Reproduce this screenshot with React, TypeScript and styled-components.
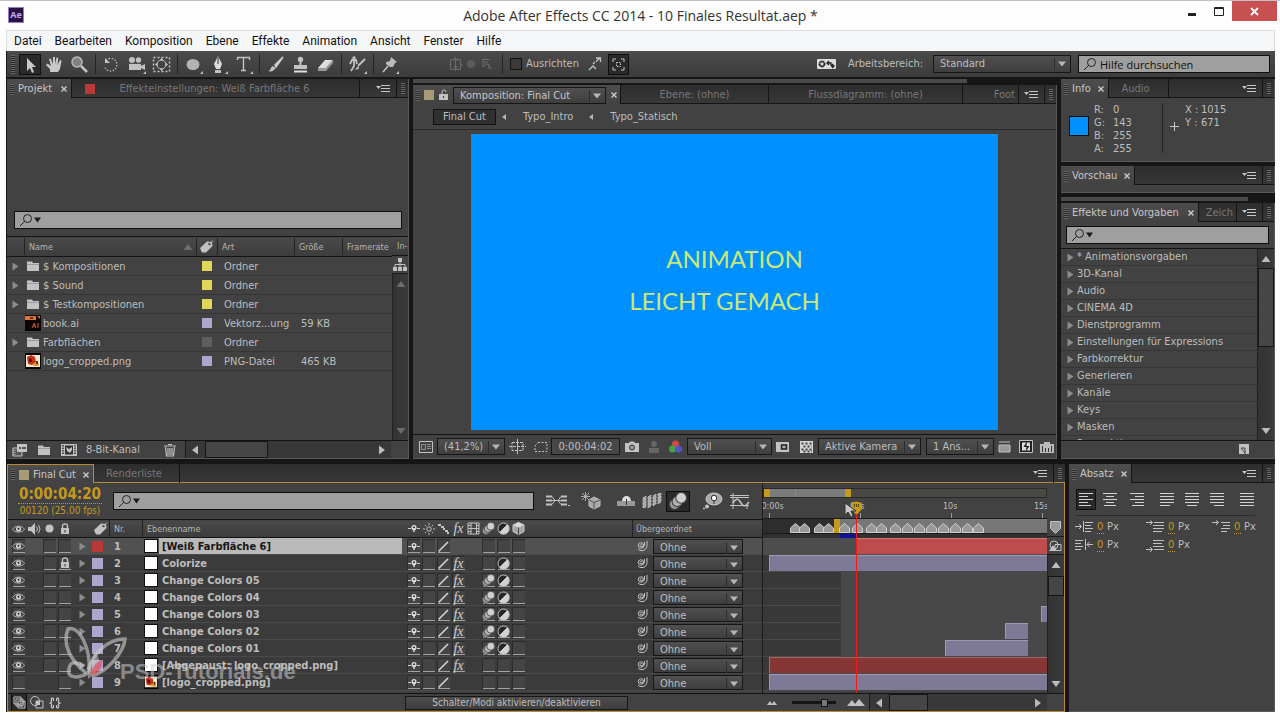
import React from "react";
import styled, { createGlobalStyle, css } from "styled-components";

const ui = `"DejaVu Sans Condensed", "DejaVu Sans", "Noto Sans", sans-serif`;
const win = `"Open Sans", "Noto Sans", sans-serif`;
const c = {
  seam: "#161616",
  panel: "#424242",
  row: "#3b3b3b",
  text: "#bdbdbd",
  dim: "#777777",
  edge: "#141414",
  light: "#5a5a5a",
  gold: "#b58a34",
  hot: "#c49a1c",
  icon: "#c2c2c2",
  field: "#9f9f9f",
  lilac: "#aaa6cc",
  yellow: "#e0d65a",
  red: "#b83a38",
};

const Global = createGlobalStyle`
  * { box-sizing: border-box; }
  body { margin: 0; background: #fdfdfd; font: 11px/16px ${ui}; color: ${c.text}; }
  button, input, select { font: inherit; color: inherit; margin: 0; padding: 0; border: 0; background: none; border-radius: 0; outline: 0; }
  svg { display: block; flex: none; }
  table { border-collapse: collapse; table-layout: fixed; }
  td, th { padding: 0; font-weight: inherit; text-align: left; white-space: nowrap; overflow: hidden; }
`;

/* ---------- window frame ---------- */
const Window = styled.div`
  min-height: 100vh;
  display: flex;
  flex-direction: column;
  border-top: 1px solid #c3bfc3;
  padding: 0 5px 8px 6px;
`;
const TitleBar = styled.header`
  height: 29px;
  display: grid;
  grid-template-columns: 136px 1fr 138px;
  margin-right: -2px;
  align-items: start;
  color: #333;
`;
const AppLogo = styled.span`
  width: 16px;
  height: 16px;
  margin: 6px 0 0 2px;
  border: 1px solid #9a7fc8;
  background: #2a1242;
  color: #c9a8f5;
  font: bold 9px/14px ${win};
  text-align: center;
`;
const Title = styled.h1`
  margin: 4px 0 0;
  font: 14px/21px ${win};
  text-align: center;
  white-space: nowrap;
`;
const WindowButtons = styled.div`
  display: flex;
  justify-content: flex-end;
`;
const WindowButton = styled.button<{ $close?: boolean }>`
  width: ${(p) => (p.$close ? 45 : 27)}px;
  height: 20px;
  display: grid;
  place-items: center;
  background: ${(p) => (p.$close ? "#c75050" : "none")};
`;
const MenuBar = styled.nav`
  height: 21px;
  display: flex;
  gap: 13px;
  padding-left: 7px;
  border: 1px solid #dcdcde;
  border-bottom: 0;
  background: #f5f6f8;
`;
const MenuItem = styled.button`
  color: #111;
  font: 12px/19px Roboto, ${win};
`;
const Shell = styled.main`
  flex: 1;
  display: flex;
  flex-direction: column;
  background: ${c.seam};
  border-left: 1px solid ${c.seam};
`;

/* ---------- toolbar ---------- */
const Toolbar = styled.div`
  height: 26px;
  display: flex;
  align-items: center;
  padding: 0 5px 0 4px;
  margin-bottom: 2px;
  background: linear-gradient(#4b4b4b, #3c3c3c);
`;
const Grip = styled.span<{ $h?: number }>`
  width: 4px;
  height: ${(p) => p.$h ?? 11}px;
  flex: none;
  background: repeating-linear-gradient(#666 0 1px, #2b2b2b 1px 2px);
`;
const Tool = styled.button<{ $on?: boolean; $w?: number }>`
  width: ${(p) => p.$w ?? 25}px;
  height: 21px;
  flex: none;
  display: grid;
  place-items: center;
  ${(p) => p.$on && css`background: #2a2a2a; border: 1px solid #0f0f0f;`}
`;
const Split = styled.span<{ $m?: number; $h?: number }>`
  width: 1px;
  height: ${(p) => p.$h ?? 20}px;
  flex: none;
  margin: 0 ${(p) => p.$m ?? 3}px;
  background: #232323;
`;
const Spacer = styled.span<{ $w?: number }>`
  flex: ${(p) => (p.$w ? `0 0 ${p.$w}px` : "1")};
`;
const Check = styled.label`
  display: flex;
  align-items: center;
  gap: 4px;
  line-height: 18px;
  input { appearance: none; width: 12px; height: 12px; background: #3a3a3a; border: 1px solid #111; }
`;

/* ---------- form parts ---------- */
const SelectBox = styled.span<{ $w?: number; $h?: number }>`
  width: ${(p) => (p.$w ? `${p.$w}px` : "100%")};
  height: ${(p) => p.$h ?? 18}px;
  flex: none;
  display: grid;
  grid-template-columns: 1fr 18px;
  align-items: center;
  border: 1px solid #161616;
  background: linear-gradient(#505050, #3e3e3e);
  select { grid-area: 1 / 1 / 2 / 3; appearance: none; width: 100%; height: 100%; padding-left: 6px; }
  svg { grid-area: 1 / 2; pointer-events: none; justify-self: center; }
`;
const Select = ({ label, value, w, h }: { label: string; value: string; w?: number; h?: number }) => (
  <SelectBox $w={w} $h={h}>
    <select aria-label={label} defaultValue={value}><option>{value}</option></select>
    <svg width="16" height="12"><path d="M1.500 0V12" stroke="#2c2c2c" /><path d="M5 3.500h8l-4 5z" fill="#b5b5b5" /></svg>
  </SelectBox>
);
const SearchBox = styled.label<{ $w?: number }>`
  ${(p) => (p.$w ? `width: ${p.$w}px; flex: none;` : "flex: 1;")}
  height: 18px;
  display: flex;
  align-items: center;
  gap: 3px;
  padding-left: 4px;
  border: 1px solid #0e0e0e;
  background: ${c.field};
  input { flex: 1; min-width: 0; height: 100%; color: #111; font: 11px/16px ${win}; }
  input::placeholder { color: #111; opacity: 1; }
`;
const Search = ({ w, placeholder, menu, label }: { w?: number; placeholder?: string; menu?: boolean; label: string }) => (
  <SearchBox $w={w}>
    <svg width={menu ? 24 : 14} height="14" fill="none" stroke="#222">
      <circle cx="8.500" cy="5.500" r="4" /><path d="M5.500 8.500 1 13" />
      {menu && <path d="M15 4.500h7l-3.500 5z" fill="#1a1a1a" stroke="none" />}
    </svg>
    <input type="text" aria-label={label} placeholder={placeholder} />
  </SearchBox>
);

/* ---------- panels ---------- */
const Panel = styled.section<{ $grow?: boolean }>`
  min-width: 0;
  min-height: 0;
  display: flex;
  flex-direction: column;
  background: ${c.panel};
  border-right: 1px solid ${c.light};
  border-bottom: 1px solid ${c.light};
  ${(p) => p.$grow && "flex: 1;"}
`;
const Tabs = styled.div<{ $hot?: boolean }>`
  height: 19px;
  flex: none;
  display: flex;
  overflow: hidden;
  background: linear-gradient(#2d2d2d, #383838);
  box-shadow: inset 0 -1px ${(p) => (p.$hot ? c.gold : c.edge)};
`;
const Tab = styled.button<{ $on?: boolean; $hot?: boolean; $w?: number; $right?: boolean }>`
  ${(p) => p.$w && `width: ${p.$w}px;`}
  flex: none;
  display: flex;
  align-items: center;
  justify-content: ${(p) => (p.$on ? "flex-start" : p.$right ? "flex-end" : "center")};
  gap: 4px;
  padding: 1px 3px 0;
  white-space: nowrap;
  overflow: hidden;
  color: ${(p) => (p.$on ? "#c6c6c6" : c.dim)};
  border-right: 1px solid ${c.edge};
  ${(p) => p.$on && css`background: linear-gradient(#4d4d4d, ${c.panel});`}
  ${(p) => p.$hot && css`border: 1px solid ${c.gold}; border-bottom: 0;`}
`;
const CloseMark = styled.svg`
  margin-left: auto;
`;
const Close = () => <CloseMark width="8" height="8" stroke="#ccc" strokeWidth="1.400"><path d="M1.500 1.500l5 5M6.500 1.500l-5 5" /></CloseMark>;
const TabEnd = () => (
  <>
    <Spacer />
    <PanelMenu aria-label="Bedienfeldmenü">
      <svg width="14" height="10" stroke="#c6c6c6"><path d="M5 1.500h9M5 4.500h9M5 7.500h9" /><path d="M0 2h5L2.500 5z" fill="#c6c6c6" stroke="none" /></svg>
    </PanelMenu>
    <TabGrip><Grip /></TabGrip>
  </>
);
const PanelMenu = styled.button`
  width: 26px;
  flex: none;
  display: grid;
  place-items: center end;
  padding-right: 6px;
  border-right: 1px solid ${c.edge};
`;
const TabGrip = styled.span`
  width: 11px;
  flex: none;
  display: grid;
  place-items: center;
`;
const Strip = styled.div<{ $end: number }>`
  height: 4px;
  flex: none;
  margin: 0 ${(p) => p.$end}px 2px 0;
  background: #4a4a4a;
`;
const Swatch = styled.span<{ $c: string; $s?: number; $b?: boolean }>`
  display: block;
  width: ${(p) => p.$s ?? 10}px;
  height: ${(p) => p.$s ?? 10}px;
  flex: none;
  background: ${(p) => p.$c};
  ${(p) => p.$b && "border: 1px solid #0e0e0e;"}
`;
const TopArea = styled.div`
  flex: 1;
  display: grid;
  grid-template-columns: 402px minmax(0, 1fr) 214px;
  gap: 4px;
  margin-bottom: 5px;
`;
const Column = styled.div`
  min-width: 0;
  min-height: 0;
  display: flex;
  flex-direction: column;
`;
const BottomArea = styled.div`
  display: grid;
  grid-template-columns: minmax(0, 1fr) 206px;
  gap: 4px;
`;
const FootBar = styled.div<{ $h?: number; $pad?: number }>`
  height: ${(p) => p.$h ?? 18}px;
  flex: none;
  display: flex;
  align-items: center;
  overflow: hidden;
  padding-left: ${(p) => p.$pad ?? 0}px;
  border-top: 1px solid ${c.edge};
`;

/* ---------- scroll bars ---------- */
const ScrollV = styled.div`
  flex: 1;
  min-height: 0;
  display: flex;
  flex-direction: column;
  align-items: center;
  padding: 5px 0 4px;
  border-left: 1px solid #222;
  background: linear-gradient(90deg, #333, #3a3a3a);
`;
const ScrollH = styled.div<{ $w?: number }>`
  ${(p) => (p.$w ? `width: ${p.$w}px; flex: none;` : "flex: 1;")}
  height: 100%;
  display: flex;
  align-items: center;
  padding: 0 4px;
  border-left: 1px solid #1a1a1a;
  background: #383838;
`;
const Thumb = styled.span<{ $w?: number; $h?: number }>`
  width: ${(p) => (p.$w ? `${p.$w}px` : "100%")};
  height: ${(p) => (p.$h ? `${p.$h}px` : "100%")};
  flex: none;
  border: 1px solid #161616;
  background: #464646;
`;
const Arrow = ({ d, off }: { d: "u" | "d" | "l" | "r"; off?: boolean }) => (
  <svg width="10" height="10" fill={off ? "#6c6c6c" : "#bbb"}>
    <path d={{ u: "M0.500 8h9L5 2z", d: "M0.500 2h9L5 8z", l: "M8 .5v9L2 5z", r: "M2 .5v9l6-4.500z" }[d]} />
  </svg>
);
const Twirl = () => <svg width="7" height="9" fill="#8c8c8c"><path d="M.5.500v8l6-4z" /></svg>;

/* ---------- icons ---------- */
const Ic = ({ w = 16, h = 16, children }: { w?: number; h?: number; children: React.ReactNode }) => (
  <svg width={w} height={h} viewBox={`0 0 ${w} ${h}`} fill="none" stroke={c.icon}>{children}</svg>
);
const F = { fill: c.icon, stroke: "none" };
const Corner = () => <path d="M20 17v3h-3z" {...F} />;
const Folder = () => <Ic w={14} h={12}><path d="M1 3V1.500h5L7 3h6v8H1z" {...F} /><path d="M1 4.500h12" stroke="#999" /></Ic>;
const Tag = () => <Ic w={15} h={13}><path d="M1 8 8 1.500l5 .5.500 4L7 12.500H3z" {...F} /><circle cx="10.500" cy="4" r="1.300" fill="#444" stroke="none" /><path d="M10.500 4 14 .5" /></Ic>;
const Eye = () => <Ic w={13} h={10}><path d="M.5 5.500C3 1 10 1 12.500 5.500 10 9 3 9 .5 5.500z" stroke="#b0b0b0" /><circle cx="6.500" cy="5" r="2.600" fill="#d0d0d0" stroke="none" /><circle cx="6.500" cy="4.800" r="1" fill="#222" stroke="none" /></Ic>;
const Speaker = () => <Ic w={13} h={12}><path d="M0 4h3l4-4v12L3 8H0z" {...F} /><path d="M8.500 3.500q2 2.500 0 5M10.500 2q3 4 0 8" /></Ic>;
const Lock = () => <Ic w={10} h={12}><rect x="1" y="5" width="8" height="6" {...F} /><path d="M2.500 5V3q0-2 2.500-2t2.500 2v2" strokeWidth="1.400" /><path d="M5 7v2.500" stroke="#333" /></Ic>;
const Shy = () => <Ic w={12} h={9}><path d="M0 4.500h3M9 4.500h3" stroke="#d0d0d0" /><path d="M6 4v4" stroke="#ddd" strokeWidth="1.500" /><circle cx="6" cy="3.500" r="1.900" stroke="#e6e6e6" strokeWidth="1.300" /></Ic>;
const Sun = () => <Ic w={12} h={12}><circle cx="6" cy="6" r="2.200" /><path d="M6 0v2M6 10v2M0 6h2M10 6h2M2 2l1.300 1.300M8.700 8.700 10 10M10 2 8.700 3.300M3.300 8.700 2 10" /></Ic>;
const Slash = () => <Ic w={13} h={13}><path d="M1.500 11.500 11 2" stroke="#d4d4d4" strokeWidth="1.600" /></Ic>;
const Dots = () => <Ic w={13} h={12}><path d="M1 1h3v2H1zM4 3h3v2H4zM6 5h2v2H6zM8 7h3v2H8zM10 9h2v2h-2z" {...F} /></Ic>;
const FilmIc = () => <Ic w={13} h={13}><path d="M1 1h11v11H1zM4 1v11M9.500 1v11M4 6.500h5M1 3.500h3M1 6.500h3M1 9.500h3M9 3.500h3M9 6.500h3M9 9.500h3" /></Ic>;
const Blur = ({ s = 13 }: { s?: number }) => (
  <svg width={s} height={s} viewBox="0 0 13 13" stroke="#444" strokeWidth=".8"><circle cx="4" cy="8.800" r="3.700" fill="#9a9a9a" /><circle cx="6" cy="6.800" r="3.700" fill="#b0b0b0" /><circle cx="8.800" cy="4.200" r="3.900" fill="#d0d0d0" /></svg>
);
const Adjust = () => <Ic w={13} h={13}><circle cx="6.500" cy="6.500" r="5.500" fill="#262626" /><path d="M10.400 2.600a5.500 5.500 0 0 1-7.800 7.800z" fill="#d2d2d2" /></Ic>;
const Cube = () => <Ic w={13} h={13}><path d="M6.500.5 12 3v6.500l-5.500 3L1 9.500V3z" fill="#a4a4a4" stroke="#ccc" /><path d="M1 3l5.500 2.500L12 3 6.500.5z" fill="#ddd" /><path d="M6.500 5.500v7" stroke="#444" /></Ic>;
const Spiral = () => <Ic w={12} h={12}><path d="M6.300 5a1.200 1.200 0 1 0-.3 1.600A1.600 1.600 0 0 0 7.600 5 2.700 2.700 0 1 0 5 8.200 3.600 3.600 0 0 0 8.500 5V2M11 1v4.500A5 5 0 0 1 6 10.600 5 5 0 0 1 2 9" /></Ic>;
const FlowIc = () => <Ic w={14} h={13}><path d="M5 0h4v4H5zM0 9h4v4H0zM5 9h4v4H5zM10 9h4v4h-4z" {...F} /><path d="M7 4v5M2 9V6.500h10V9" /></Ic>;
const Fx = styled.i`
  font: italic 14px/13px "Liberation Serif", serif;
  color: #d0d0d0;
`;

/* ---------- project ---------- */
const ProjectPreview = styled.div`
  flex: 1;
`;
const SearchRow = styled.div<{ $p: string }>`
  display: flex;
  flex: none;
  padding: ${(p) => p.$p};
`;
const HeadCell = css`
  height: 20px;
  font-size: 10px;
  color: #b5b5b5;
  background: linear-gradient(#4a4a4a, #3c3c3c);
  border-top: 1px solid ${c.edge};
  border-bottom: 1px solid ${c.edge};
`;
const ProjectBody = styled.div`
  height: 204px;
  flex: none;
  display: flex;
`;
const ProjectTable = styled.table`
  width: 385px;
  align-self: flex-start;
  th { ${HeadCell} font-size: 9px; }
  td { height: 19px; border-bottom: 1px solid #353535; }
  td > svg, td > span { margin: 0 auto; }
`;
const ThInner = styled.span<{ $p?: number; $line?: boolean }>`
  height: 17px;
  display: flex;
  align-items: center;
  justify-content: space-between;
  padding: 0 3px 0 ${(p) => p.$p ?? 5}px;
  ${(p) => p.$line && `box-shadow: inset 1px 0 #222;`}
`;
const Side = styled.div<{ $w: number }>`
  width: ${(p) => p.$w}px;
  flex: none;
  display: flex;
  flex-direction: column;
`;
const SideHead = styled.div`
  ${HeadCell}
  flex: none;
  font-size: 9px;
  line-height: 18px;
  overflow: hidden;
  padding-left: 5px;
`;
const SideButton = styled.button<{ $h: number }>`
  height: ${(p) => p.$h}px;
  flex: none;
  display: grid;
  place-items: center;
  border-bottom: 1px solid #1c1c1c;
`;
const Thumbnail = ({ ai, s = 16 }: { ai?: boolean; s?: number }) => (
  <svg width={s} height={s} viewBox="0 0 16 16">
    <rect width="16" height="16" fill="#0a0504" />
    {ai ? (
      <><path d="M0 1h11v4H0z" fill="#e0762c" /><path d="M5 2h3v2H5z" fill="#6b2a10" /><path d="M12 1h3v3z" fill="#e0762c" /><path d="M7 13l2.500-5 1 5M8 11h2M13 8v5" stroke="#d9602c" fill="none" /></>
    ) : (
      <><rect x="1" y="2" width="14" height="12" fill="#f4ead8" /><path d="M2 4l4-2 4 2 1 5-4 3-4-1z" fill="#c2341a" /><path d="M4 5l3 1v3H4z" fill="#5c1208" /><path d="M9 10l4-1 1 4H8z" fill="#e09a20" /><path d="M11 8h2v3h-2z" fill="#51320a" /></>
    )}
  </svg>
);

const assets = [
  { name: "$ Kompositionen", color: c.yellow, kind: "Ordner", size: "" },
  { name: "$ Sound", color: c.yellow, kind: "Ordner", size: "" },
  { name: "$ Testkompositionen", color: c.yellow, kind: "Ordner", size: "" },
  { name: "book.ai", color: c.lilac, kind: "Vektorz...ung", size: "59 KB" },
  { name: "Farbflächen", color: "#5e5e5e", kind: "Ordner", size: "" },
  { name: "logo_cropped.png", color: c.lilac, kind: "PNG-Datei", size: "465 KB" },
];

const Project = () => (
  <Panel>
    <Tabs>
      <Tab $on $w={65}><Grip />Projekt<Close /></Tab>
      <Tab $w={288}><Swatch $c={c.red} /><Spacer $w={16} />Effekteinstellungen: Weiß Farbfläche 6<Spacer $w={32} /></Tab>
      <TabEnd />
    </Tabs>
    <ProjectPreview />
    <SearchRow $p="0 6px 7px 7px"><Search menu label="Projekt durchsuchen" /></SearchRow>
    <ProjectBody>
      <ProjectTable>
        <colgroup><col width="17" /><col width="18" /><col width="154" /><col width="21" /><col width="77" /><col width="48" /><col width="50" /></colgroup>
        <thead>
          <tr>
            <th /><th colSpan={2}><ThInner $line>Name<Arrow d="u" off /></ThInner></th>
            <th aria-label="Etikett"><ThInner $line $p={3}><Tag /></ThInner></th>
            <th><ThInner $line>Art</ThInner></th><th><ThInner $line>Größe</ThInner></th><th><ThInner $line>Framerate</ThInner></th>
          </tr>
        </thead>
        <tbody>
          {assets.map((a) => (
            <tr key={a.name}>
              <td>{a.kind === "Ordner" && <Twirl />}</td>
              <td>{a.kind === "Ordner" ? <Folder /> : <Thumbnail ai={a.name === "book.ai"} />}</td>
              <td><Name $p={1}>{a.name}</Name></td>
              <td><Swatch $c={a.color} /></td>
              <td><Name $p={7}>{a.kind}</Name></td>
              <td colSpan={2}><Name $p={7}>{a.size}</Name></td>
            </tr>
          ))}
        </tbody>
      </ProjectTable>
      <Side $w={16}>
        <SideHead>In-</SideHead>
        <SideButton $h={18} aria-label="Flussdiagramm"><FlowIc /></SideButton>
        <ScrollV><Arrow d="u" off /><Spacer /><Arrow d="d" off /></ScrollV>
      </Side>
    </ProjectBody>
    <FootBar $pad={4}>
      <Tool aria-label="Footage interpretieren" $w={18}><Ic><path d="M1 6h9v8H1z" fill="#555" /><path d="M1 8v5M3 8v5" strokeDasharray="1 1" /><path d="M5 2h10v8H5z" {...F} /><path d="M7 6h2M10 6h4" stroke="#333" strokeWidth="1.500" /></Ic></Tool>
      <Tool aria-label="Neuer Ordner" $w={30}><Folder /></Tool>
      <Tool aria-label="Neue Komposition" $w={20}><Ic><path d="M0 2h16v12H0z" {...F} /><path d="M4 3.500h8v9H4z" fill="#333" stroke="none" /><path d="M2 3v10M14 3v10" strokeDasharray="1.500 1" strokeWidth="1.500" stroke="#333" /><path d="M5 5l3 2 3-2v3l-2 3-3-2z" {...F} /></Ic></Tool>
      <Spacer $w={7} />
      <button>8-Bit-Kanal</button>
      <Spacer />
      <Tool aria-label="Löschen" $w={22}><Ic w={12} h={14}><path d="M0 3h12M4 1.500h4M1.500 4l1 9h7l1-9M4 5v7M6 5v7M8 5v7" strokeWidth="1.200" /></Ic></Tool>
      <Spacer $w={4} />
      <ScrollH $w={206}><Arrow d="l" /><Spacer $w={5} /><Thumb $w={63} /><Spacer /><Arrow d="r" /></ScrollH>
      <Spacer $w={17} />
    </FootBar>
  </Panel>
);
const Name = styled.span<{ $p?: number }>`
  display: block;
  height: 18px;
  line-height: 19px;
  padding-left: ${(p) => p.$p ?? 0}px;
`;

/* ---------- composition ---------- */
const Crumbs = styled.nav`
  height: 26px;
  flex: none;
  display: flex;
  align-items: center;
  padding-left: 20px;
  border-bottom: 1px solid #2b2b2b;
`;
const Crumb = styled.button<{ $on?: boolean }>`
  height: 16px;
  line-height: 14px;
  padding: 0 9px;
  border: 1px solid ${(p) => (p.$on ? "#111" : "transparent")};
  background: ${(p) => (p.$on ? "#303030" : "none")};
`;
const Viewer = styled.div`
  flex: 1;
  display: flex;
  justify-content: center;
  align-items: center;
`;
const Stage = styled.div`
  height: 296px;
  aspect-ratio: 527 / 296;
  padding-bottom: 4px;
  background: #0090ff;
  color: #cbe874;
  display: flex;
  flex-direction: column;
  justify-content: center;
  align-items: center;
  font: 24px/42px Lato, "Open Sans", sans-serif;
`;
const StageLine = styled.span`
  white-space: nowrap;
  &:last-child { margin-right: 20px; }
`;
const TimeField = styled.button`
  width: 69px;
  height: 17px;
  flex: none;
  border: 1px solid #161616;
  background: #484848;
`;
const Back = () => <svg width="17" height="8" fill="#b5b5b5"><path d="M10 1v6L6 4z" /></svg>;

const Composition = () => (
  <Column>
    <Strip $end={90} />
    <Panel $grow>
      <Tabs>
        <Tab $on $w={208} as="div"><Grip /><Swatch $c="#a89a76" /><Ic w={11} h={12}><rect x="1" y="5" width="9" height="6" {...F} /><path d="M4 5V3q0-2 2-2t2 2" /><path d="M5.500 7v2" stroke="#333" /></Ic><Select label="Komposition" value="Komposition: Final Cut" w={153} h={17} /><Close /></Tab>
        <Tab $w={148}>Ebene: (ohne)</Tab>
        <Tab $w={194}>Flussdiagramm: (ohne)</Tab>
        <Tab $w={56} $right>Foot</Tab>
        <TabEnd />
      </Tabs>
      <Crumbs><Crumb $on>Final Cut</Crumb><Back /><Crumb>Typo_Intro</Crumb><Back /><Crumb>Typo_Statisch</Crumb></Crumbs>
      <Viewer><Stage><StageLine>ANIMATION</StageLine><StageLine>LEICHT GEMACH</StageLine></Stage></Viewer>
      <FootBar $h={24} $pad={2}>
        <Tool aria-label="Immer Vorschau" $w={22}><Ic w={14} h={12}><path d="M.5.500h13v11H.5z" /><path d="M2.500 3.500h4v5h-4zM8 3.500h4M8 5.500h4M8 7.500h4" stroke="#909090" /></Ic></Tool>
        <Select label="Zoom" value="(41,2%)" w={68} h={17} />
        <Tool aria-label="Raster"><Ic w={18} h={16}><path d="M3 3.500h11v8H3zM8.500 0v15M0 7.500h17" strokeDasharray="3 1" /></Ic></Tool>
        <Tool aria-label="Maske" $w={21}><Ic w={14} h={12}><path d="M4 1.500h9v9H1V5z" strokeDasharray="2 1.500" /></Ic></Tool>
        <TimeField>0:00:04:02</TimeField>
        <Tool aria-label="Schnappschuss" $w={23}><Ic w={14} h={12}><path d="M0 2h4l1-1.500h4L10 2h4v9H0z" {...F} /><circle cx="7" cy="6.500" r="2.500" stroke="#333" fill="#999" /></Ic></Tool>
        <Tool aria-label="Schnappschuss anzeigen" $w={22}><Ic w={12} h={14}><circle cx="6" cy="4" r="3" fill="#666" stroke="none" /><path d="M1 13V8h10v5z" fill="#666" stroke="none" /></Ic></Tool>
        <Tool aria-label="Kanäle" $w={22}><svg width="16" height="14"><circle cx="7.500" cy="4" r="3.500" fill="#cf4a43" /><circle cx="4.500" cy="9" r="3.500" fill="#4aa046" /><circle cx="10.500" cy="9" r="3.500" fill="#5656c8" /></svg></Tool>
        <Select label="Auflösung" value="Voll" w={85} h={17} />
        <Tool aria-label="Bereich" $w={22}><Ic w={14} h={12}><path d="M0 1h13v10H0z" {...F} /><path d="M5.500 4h5v4h-5z" stroke="#222" fill="#aaa" strokeWidth="1.500" /></Ic></Tool>
        <Tool aria-label="Transparenz" $w={24}><svg width="13" height="12" fill="#d5d5d5"><path d="M0 0h13v12H0z" /><path d="M1.500 2.500H12M3.500 5.500H12M1.500 8.500H12M3.500 10.500H12" stroke="#444" strokeWidth="2" strokeDasharray="2 2" /></svg></Tool>
        <Select label="Ansicht" value="Aktive Kamera" w={103} h={17} />
        <Spacer $w={5} />
        <Select label="Ansichten" value="1 Ans..." w={68} h={17} />
        <Tool aria-label="Seitenverhältnis" $w={22}><Ic w={14} h={12}><path d="M1 1h11M1 4h11v7H1z" fill="#999" /></Ic></Tool>
        <Tool aria-label="Schnelle Vorschau" $w={21}><Ic w={15} h={15}><path d="M.5 1.500h13v12H.5z" fill="#222" /><path d="M3 3.500h8v8H3z" stroke="none" fill="#ddd" /><path d="M8 2 4.500 8h3l-1 5 4-6h-3z" fill="#222" stroke="none" /></Ic></Tool>
        <Tool aria-label="Zeitleiste" $w={19}><Ic w={14} h={12}><path d="M0 3h4V1h6v2h4v9H0z" fill="#bbb" stroke="none" /><path d="M2.500 5v6M5.500 7v4M8.500 7v4M11.500 5v6" stroke="#333" /></Ic></Tool>
      </FootBar>
    </Panel>
  </Column>
);

/* ---------- right column ---------- */
const InfoBody = styled.div`
  height: 63px;
  display: flex;
  padding: 5px 8px;
`;
const InfoList = styled.dl<{ $k: number }>`
  margin: 0;
  display: grid;
  grid-template-columns: ${(p) => p.$k}px 42px;
  grid-auto-rows: 13px;
  line-height: 14px;
  align-content: start;
  dd { margin: 0; }
`;
const SwatchWrap = styled.span`
  width: 25px;
  padding-top: 13px;
`;
const ListArea = styled.div`
  flex: 1 1 0;
  min-height: 0;
  display: flex;
  border-top: 1px solid ${c.edge};
`;
const EffectList = styled.ul`
  flex: 1;
  margin: 0;
  padding: 0;
  overflow: hidden;
  list-style: none;
`;
const EffectItem = styled.li`
  height: 17px;
  display: flex;
  align-items: center;
  gap: 3px;
  padding-left: 6px;
  border-bottom: 1px solid #363636;
`;
const effects = ["* Animationsvorgaben", "3D-Kanal", "Audio", "CINEMA 4D", "Dienstprogramm", "Einstellungen für Expressions", "Farbkorrektur", "Generieren", "Kanäle", "Keys", "Masken", "Perspektive"];

const Sidebar = () => (
  <Column>
    <Panel>
      <Tabs><Tab $on $w={48}><Grip />Info<Close /></Tab><Tab $w={60}>Audio<Spacer $w={2} /></Tab><TabEnd /></Tabs>
      <InfoBody>
        <SwatchWrap><Swatch $c="#0090ff" $s={20} $b /></SwatchWrap>
        <InfoList $k={19}><dt>R:</dt><dd>0</dd><dt>G:</dt><dd>143</dd><dt>B:</dt><dd>255</dd><dt>A:</dt><dd>255</dd></InfoList>
        <Split $m={7} $h={50} />
        <svg width="15" height="46" stroke="#c6c6c6"><path d="M4.500 19v9M0 23.500h9" /></svg>
        <InfoList $k={16}><dt>X :</dt><dd>1015</dd><dt>Y :</dt><dd>671</dd></InfoList>
      </InfoBody>
    </Panel>
    <Spacer $w={4} />
    <Panel>
      <Tabs><Tab $on $w={74}><Grip />Vorschau<Close /></Tab><TabEnd /></Tabs>
      <Spacer $w={7} />
    </Panel>
    <Spacer $w={4} />
    <Strip $end={27} />
    <Panel $grow>
      <Tabs>
        <Tab $on $w={138}><Grip />Effekte und Vorgaben<Close /></Tab>
        <Tab $w={38} $right>Zeich</Tab>
        <TabEnd />
      </Tabs>
      <SearchRow $p="4px 5px"><Search menu label="Effekte durchsuchen" /></SearchRow>
      <ListArea>
        <EffectList>{effects.map((e) => <EffectItem key={e}><Twirl />{e}</EffectItem>)}</EffectList>
        <Side $w={17}><ScrollV><Arrow d="u" /><Spacer $w={4} /><Thumb $h={79} /><Spacer /><Arrow d="d" /></ScrollV></Side>
      </ListArea>
      <FootBar><Spacer /><Tool aria-label="Neuer Binärordner" $w={20}><Ic w={11} h={11}><path d="M0 0h10v10H0z" {...F} /><path d="M2 4h4v6M2 4l4 5" stroke="#444" /></Ic></Tool><Spacer $w={20} /></FootBar>
    </Panel>
  </Column>
);

/* ---------- timeline ---------- */
const TimelinePanel = styled.section`
  position: relative;
  min-width: 0;
  display: flex;
  flex-direction: column;
  background: ${c.panel};
`;
const TimelineFrame = styled.div`
  border: 1px solid ${c.gold};
  border-top: 0;
`;
const TimelineBody = styled.div`
  display: flex;
  height: 210px;
`;
const Layers = styled.div`
  width: 755px;
  flex: none;
  border-right: 1px solid #1a1a1a;
`;
const LayerTop = styled.div`
  height: 36px;
  display: flex;
  align-items: center;
`;
const TimeReadout = styled.button`
  width: 104px;
  color: ${c.hot};
  line-height: 13px;
  strong { display: block; width: 84px; margin: 0 auto; font-size: 15px; line-height: 17px; border-bottom: 1px dotted ${c.hot}; }
  small { font-size: 10px; }
`;
const LayerTable = styled.table`
  width: 754px;
  th { ${HeadCell} height: 18px; font-size: 9px; }
  th svg, td svg { margin: 0 auto; }
`;
const LayerRow = styled.tr<{ $on?: boolean }>`
  background: ${(p) => (p.$on ? "#515151" : c.row)};
  td { height: 17px; border-bottom: 1px solid #4a4a4a; }
`;
const Switch = styled.button<{ $left?: boolean }>`
  width: 13px;
  height: 14px;
  display: grid;
  place-items: center;
  margin: ${(p) => (p.$left ? "0 0 0 4px" : "0 auto")};
  background: #444;
  box-shadow: inset 1px 1px #2c2c2c, inset 0 -1px #a2a2a2;
`;
const HeadIcon = styled.span<{ $left?: boolean }>`
  height: 16px;
  display: grid;
  place-items: center;
  ${(p) => p.$left && "padding-left: 2px;"}
`;
const Num = styled.b`
  display: block;
  height: 16px;
  padding-left: 5px;
  line-height: 17px;
`;
const LayerIcon = styled.span`
  display: block;
  width: 14px;
  height: 14px;
  margin: 0 auto;
  background: #fff;
  border: 1px solid #0e0e0e;
`;
const LayerName = styled.b<{ $on?: boolean }>`
  display: block;
  height: 16px;
  margin-right: 4px;
  padding-left: 3px;
  line-height: 18px;
  ${(p) => p.$on && "background: #b9b9b9; color: #161616;"}
`;
type Layer = { name: string; color?: string; fx?: boolean; blur?: boolean; adj?: boolean; lock?: boolean; on?: boolean; image?: boolean; bar?: [number, number]; barColor?: string };
const bar = { lilac: "#7d7996", red: "#863634", hot: "#bf4c4c" };
const layers: Layer[] = [
  { name: "[Weiß Farbfläche 6]", color: c.red, on: true, bar: [4.8, 15.27], barColor: bar.hot },
  { name: "Colorize", fx: true, adj: true, lock: true, bar: [0, 15.27] },
  { name: "Change Colors 05", fx: true, blur: true, adj: true },
  { name: "Change Colors 04", fx: true, blur: true, adj: true },
  { name: "Change Colors 03", fx: true, blur: true, adj: true, bar: [14.92, 15.27] },
  { name: "Change Colors 02", fx: true, blur: true, adj: true, bar: [12.94, 14.25] },
  { name: "Change Colors 01", fx: true, blur: true, adj: true, bar: [9.64, 14.25] },
  { name: "[Abgepaust: logo_cropped.png]", fx: true, bar: [0, 15.27], barColor: bar.red },
  { name: "[logo_cropped.png]", image: true, bar: [0, 15.27] },
];
const at = (s: number) => `${((s + 0.33) / 15.6) * 100}%`;
const span = (a: number, b: number) => ({ left: at(a), width: `${((b - a) / 15.6) * 100}%` });

const Time = styled.div`
  position: relative;
  flex: 1;
  min-width: 0;
  overflow: hidden;
`;
const NavBar = styled.div`
  position: relative;
  height: 10px;
  margin-top: 5px;
  background: #4b4944;
  border: 1px solid #292929;
`;
const NavRange = styled.div`
  width: 31%;
  height: 8px;
  background: #7b7b7b;
  border: solid ${c.hot};
  border-width: 0 6px;
`;
const NavMark = styled.span`
  position: absolute;
  left: 11%;
  top: 0;
  width: 1px;
  height: 8px;
  background: #f06060;
`;
const Ruler = styled.div`
  position: relative;
  height: 20px;
`;
const RulerLabel = styled.span`
  position: absolute;
  top: 0;
  font-size: 9px;
  transform: translateX(-50%);
`;
const RulerTick = styled.span`
  position: absolute;
  bottom: 0;
  width: 1px;
  height: 5px;
  background: #999;
`;
const Markers = styled.div`
  position: relative;
  height: 16px;
  border-top: 1px solid #1b1b1b;
  border-bottom: 1px solid #1b1b1b;
  background: #2d2d2d;
`;
const WorkArea = styled.span`
  position: absolute;
  top: 0;
  right: 0;
  height: 14px;
  background: #777;
  border-left: 6px solid ${c.hot};
`;
const Marker = styled.svg`
  position: absolute;
  top: 4px;
  margin-left: -6px;
`;
const Cache = styled.div`
  position: relative;
  height: 4px;
  background: #303030;
  span { position: absolute; top: 0; height: 4px; background: #12129c; }
`;
const Track = styled.div<{ $on?: boolean; $free?: boolean }>`
  position: relative;
  height: 17px;
  background: ${(p) => (p.$on ? "#4d4d4d" : "#393939")};
  border-bottom: 1px solid ${(p) => (p.$on ? "#4d4d4d" : "#4a4a4a")};
`;
const WorkShade = styled.span`
  position: absolute;
  top: 0;
  bottom: -1px;
  right: 0;
  background: #484848;
`;
const Bar = styled.span<{ $c: string }>`
  position: absolute;
  top: 0;
  height: 16px;
  background: ${(p) => p.$c};
  box-shadow: inset 1px 1px rgba(255, 255, 255, 0.25);
`;
const Playhead = styled.span`
  position: absolute;
  z-index: 1;
  top: 31px;
  bottom: 0;
  margin-left: -1px;
  border-left: 1px solid #ee1c18;
`;
const PlayheadGrip = styled.svg`
  position: absolute;
  top: 18px;
  margin-left: -6px;
`;
const Pointer = styled.svg`
  position: absolute;
  top: 19px;
  margin-left: -13px;
`;
const LayerFoot = styled(FootBar)`
  button { flex: none; }
`;
const ModeButton = styled.button`
  width: 223px;
  height: 14px;
  line-height: 12px;
  font-size: 10px;
  border: 1px solid #161616;
  background: linear-gradient(#4d4d4d, #3e3e3e);
`;
const ZoomRange = styled.input`
  appearance: none;
  width: 44px;
  height: 10px;
  background: linear-gradient(#151515, #151515) center / 100% 3px no-repeat;
  &::-webkit-slider-thumb { appearance: none; width: 7px; height: 8px; background: #777; border: 1px solid #151515; }
`;
const Watermark = styled.div`
  position: absolute;
  z-index: 2;
  left: 50px;
  top: 160px;
  display: flex;
  align-items: flex-end;
  color: rgba(205, 205, 205, 0.55);
  font: bold 22px/20px "Liberation Sans", sans-serif;
  pointer-events: none;
  span { margin-left: -9px; }
`;
const markers = [1.5, 2, 2.8, 3.3, 4.18, 4.9, 5.65, 6.2, 6.98, 7.63, 8.3, 8.96, 9.62, 10.28, 10.94, 11.55];
const LayerHead = ["Video", "Audio", "Solo", "Schützen"];
const headIcons = [<Eye />, <Speaker />, <Ic w={9} h={9}><circle cx="4.500" cy="4.500" r="4" {...F} /></Ic>, <Lock />];
const switchHeads: [string, React.ReactNode][] = [["Scheu", <Shy />], ["Falten", <Sun />], ["Qualität", <Dots />], ["Effekt", <Fx>fx</Fx>], ["Frame", <FilmIc />], ["Bewegungsunschärfe", <Blur />], ["Einstellung", <Adjust />], ["3D", <Cube />]];

const Timeline = () => (
  <TimelinePanel>
    <Tabs $hot>
      <Tab $on $hot $w={87}><Grip /><Swatch $c="#a89a76" />Final Cut<Close /></Tab>
      <Tab $w={86}>Renderliste<Spacer $w={1} /></Tab>
      <TabEnd />
    </Tabs>
    <TimelineFrame>
      <TimelineBody>
        <Layers>
          <LayerTop>
            <TimeReadout><strong>0:00:04:20</strong><small>00120 (25.00 fps)</small></TimeReadout>
            <Spacer $w={1} />
            <Search menu w={421} label="Ebenen durchsuchen" />
            <Spacer $w={11} />
            <Tool aria-label="Mini-Flussdiagramm" $w={26}><Ic w={24} h={14}><path d="M0 2.500h6M0 6.500h6M0 10.500h6M15 2.500h6M15 6.500h6M15 10.500h6" strokeWidth="2" /><path d="M6 2.500l3 4-3 4M15 2.500l-3 4 3 4M6 6.500h9" /><path d="M22 11.500h2" /></Ic></Tool>
            <Spacer $w={9} />
            <Tool aria-label="3D-Entwurf" $w={22}><Ic w={20} h={18}><path d="M4.500 0v9M0 4.500h9M1 1l7 7M8 1 1 8" strokeWidth=".8" /><path d="M13 5l6 3v6l-6 3-5-3V8z" fill="#a8a8a8" /><path d="M8 8l5 2.500L19 8M13 10.500V17" stroke="#555" /></Ic></Tool>
            <Spacer $w={13} />
            <Tool aria-label="Scheue Ebenen" $w={22}><Ic w={18} h={16}><path d="M0 8h18v5H0z" fill="#999" stroke="none" /><path d="M5 8a4.500 5 0 0 1 9 0z" fill="#ddd" stroke="none" /><path d="M9.500 6v6" stroke="#333" /></Ic></Tool>
            <Spacer $w={4} />
            <Tool aria-label="Frame-Überblendung" $w={22}><Ic w={20} h={18}><path d="M1 6l3-2v11l-3 1zM6 5l3-2v11l-3 2zM11 4l3-2v10l-3 2zM16 2l3-1v9l-3 2z" fill="#a8a8a8" strokeDasharray="2 1" /></Ic></Tool>
            <Spacer $w={3} />
            <Tool $on aria-label="Bewegungsunschärfe" $w={24}><Blur s={18} /></Tool>
            <Spacer $w={11} />
            <Tool aria-label="Brainstorm" $w={24}><Ic w={20} h={18}><ellipse cx="11" cy="7" rx="8" ry="6" fill="#aaa" stroke="#ccc" /><circle cx="11" cy="6" r="2.700" fill="#fff" stroke="#333" /><path d="M11 9v3" stroke="#333" /><circle cx="4" cy="14.500" r="2" {...F} /><circle cx="1" cy="16.500" r="1" {...F} /></Ic></Tool>
            <Spacer $w={3} />
            <Tool aria-label="Diagrammeditor" $w={24}><Ic w={20} h={17}><path d="M0 2.500h19M0 4.500h19M0 12.500h19M3 0v16M17 12v4" /><path d="M3 10c3-5 5-5 8 0s5 3 8-1" strokeWidth="1.500" /></Ic></Tool>
          </LayerTop>
          <LayerTable>
            <colgroup>
              {[19, 15, 15, 15, 20, 17, 33, 17, 247, 15, 15, 15, 15, 15, 15, 15, 15, 106, 19, 111].map((w, i) => <col key={i} width={w} />)}
            </colgroup>
            <thead>
              <tr>
                {LayerHead.map((l, i) => <th key={l} aria-label={l}><HeadIcon $left={i === 0}>{headIcons[i]}</HeadIcon></th>)}
                <th><ThInner $p={0} /></th><th aria-label="Etikett"><Tag /></th>
                <th><ThInner $line>Nr.</ThInner></th>
                <th colSpan={2}><ThInner $line>Ebenenname</ThInner></th>
                {switchHeads.map(([l, i]) => <th key={l} aria-label={l}><HeadIcon>{i}</HeadIcon></th>)}
                <th /><th colSpan={2}><ThInner $line $p={4}>Übergeordnet</ThInner></th>
              </tr>
            </thead>
            <tbody>
              {layers.map((l, i) => (
                <LayerRow key={l.name} $on={l.on}>
                  <td><Switch $left aria-label="Video">{!l.image && <Eye />}</Switch></td>
                  <td />
                  <td>{!l.image && <Switch aria-label="Solo" />}</td>
                  <td><Switch aria-label="Schützen">{l.lock && <Lock />}</Switch></td>
                  <td><Twirl /></td>
                  <td><Swatch $c={l.color ?? c.lilac} $s={11} /></td>
                  <td><Num>{i + 1}</Num></td>
                  <td>{l.image ? <Thumbnail s={14} /> : <LayerIcon />}</td>
                  <td><LayerName $on={l.on}>{l.name}</LayerName></td>
                  <td><Switch aria-label="Scheu"><Shy /></Switch></td>
                  <td><Switch aria-label="Falten" /></td>
                  <td><Switch aria-label="Qualität"><Slash /></Switch></td>
                  <td>{l.fx && <Switch aria-label="Effekte"><Fx>fx</Fx></Switch>}</td>
                  <td />
                  <td><Switch aria-label="Bewegungsunschärfe">{l.blur && <Blur />}</Switch></td>
                  <td><Switch aria-label="Einstellung">{l.adj && <Adjust />}</Switch></td>
                  <td><Switch aria-label="3D" /></td>
                  <td />
                  <td><Spiral /></td>
                  <td><ParentCell><Select label={`Übergeordnet ${i + 1}`} value="Ohne" w={90} h={15} /></ParentCell></td>
                </LayerRow>
              ))}
            </tbody>
          </LayerTable>
        </Layers>
        <Time>
          <NavBar><NavRange /><NavMark /></NavBar>
          <Ruler>
            <RulerLabel style={{ left: at(0.2) }}>0:00s</RulerLabel>
            <RulerLabel style={{ left: at(4.85) }}>05s</RulerLabel>
            <RulerLabel style={{ left: at(9.95) }}>10s</RulerLabel>
            <RulerLabel style={{ left: at(14.95) }}>15s</RulerLabel>
            {[0, 5, 10, 15].map((s) => <RulerTick key={s} style={{ left: at(s) }} />)}
          </Ruler>
          <Markers>
            <WorkArea style={{ left: at(3.55) }} />
            {markers.map((m) => (
              <Marker key={m} width="11" height="10" style={{ left: at(m) }}><path d="M.5 9.500V5l5-4.500 5 4.500v4.500z" fill="#999" stroke="#d0d0d0" /></Marker>
            ))}
          </Markers>
          <Cache><span style={span(3.9, 4.8)} /></Cache>
          {layers.map((l) => (
            <Track key={l.name} $on={l.on}>
              {!l.on && <WorkShade style={{ left: at(3.93) }} />}
              {l.bar && <Bar $c={l.barColor ?? bar.lilac} style={span(l.bar[0], l.bar[1])} />}
            </Track>
          ))}
          <Playhead style={{ left: at(4.82) }} />
          <PlayheadGrip width="11" height="15" style={{ left: at(4.82) }}><path d="M0 2q5-3 11 0v6l-5.500 6L0 8z" fill={c.hot} /><path d="M3.500 3v3M5.500 3v3M7.500 3v3" stroke="#5b4300" /></PlayheadGrip>
          <Pointer width="13" height="17" style={{ left: at(4.82) }}><path d="M1 1v12l3-3 3 5 2-1-2-5h5z" fill="#c9c9c9" stroke="#333" /></Pointer>
        </Time>
        <Side $w={17}>
          <Spacer $w={35} />
          <SideButton $h={19} aria-label="Marke"><Ic w={11} h={13}><path d="M.5.500h10v7l-5 5-5-5z" fill="#999" /></Ic></SideButton>
          <SideButton $h={18} aria-label="Komposition"><Ic w={13} h={12}><circle cx="5" cy="5" r="4" /><path d="M6 4.500h6v6H6z" /><path d="M0 11l4-6 4 6z" {...F} /></Ic></SideButton>
          <ScrollV><Arrow d="u" /><Spacer $w={6} /><Thumb $h={20} /><Spacer /><Arrow d="d" /></ScrollV>
        </Side>
      </TimelineBody>
      <LayerFoot $pad={3}>
        <Tool $on aria-label="Ebenenschalter" $w={16}><Ic w={13} h={13}><path d="M1 1h7v7H1zM3 3h7v7H3zM5 5h7v7H5z" fill="#333" /><path d="M6 8l2 2 3-4" /></Ic></Tool>
        <Tool aria-label="Übertragungssteuerung" $w={20}><Ic w={14} h={13}><circle cx="5" cy="5" r="4.500" /><path d="M6 5h7v7H6z" /><path d="M6 5h4v4H6z" {...F} /></Ic></Tool>
        <Tool aria-label="In/Out" $w={16}><Ic w={12} h={12}><path d="M4 1Q2 1 2.500 3.500T.500 6Q3 6 2.500 8.500T4 11M8 1q2 0 1.500 2.500t2 2.500Q9 6 9.500 8.500T8 11" strokeWidth="1.400" /><path d="M4.500 1v3M7.500 1v3M4.500 8v3M7.500 8v3" /></Ic></Tool>
        <Spacer $w={342} />
        <ModeButton>Schalter/Modi aktivieren/deaktivieren</ModeButton>
        <Spacer />
        <Ic w={10} h={7}><path d="M0 6l3-4 2 3 2-3 3 4z" {...F} /></Ic>
        <Spacer $w={15} />
        <ZoomRange type="range" defaultValue={78} aria-label="Zeitzoom" />
        <Spacer $w={11} />
        <Ic w={18} h={9}><path d="M0 8l5-6 3 4 4-5 6 7z" {...F} /></Ic>
        <Spacer $w={4} />
        <ScrollH $w={178}><Arrow d="l" /><Spacer $w={5} /><Thumb $w={39} /><Spacer /><Arrow d="r" /></ScrollH>
        <Spacer $w={17} />
      </LayerFoot>
    </TimelineFrame>
    <Watermark>
      <svg width="72" height="58" fill="none" stroke="rgba(205,205,205,.6)" strokeWidth="3.500">
        <path d="M29 49C13 36 5 20 11 5 22 1 34 24 32 48" /><path d="M31 46C36 30 50 15 68 15 67 28 50 48 35 52" /><path d="M27 42C16 36 11 38 12 50c4 5 14 3 20-2" />
        <path d="M38 28c-4 8-8 15-7 27 6-3 11-12 11-20z" fill="rgba(205,205,205,.5)" stroke="none" /><path d="M33 50c4-10 8-13 12-14q1 8-7 15z" fill="rgba(225,90,105,.8)" stroke="none" />
      </svg>
      <span>PSD-Tutorials.de</span>
    </Watermark>
  </TimelinePanel>
);
const ParentCell = styled.div`
  padding-left: 2px;
`;

/* ---------- paragraph ---------- */
const AlignRow = styled.div`
  display: flex;
  margin: 6px 19px 3px 7px;
  padding-bottom: 5px;
  border-bottom: 1px solid #2a2a2a;
`;
const Indents = styled.div`
  display: grid;
  grid-template-columns: 71px 66px 55px;
  padding-left: 6px;
  row-gap: 2px;
`;
const Indent = styled.label`
  height: 16px;
  display: flex;
  align-items: center;
  gap: 3px;
  input { width: 7px; height: 13px; color: ${c.hot}; border-bottom: 1px dotted ${c.hot}; }
`;
const aligns: [string, string][] = [
  ["Linksbündig", "M1 1.500h14M1 4.500h9M1 7.500h14M1 10.500h9M1 13.500h12"],
  ["Zentriert", "M1 1.500h14M4 4.500h8M1 7.500h14M4 10.500h8M2 13.500h12"],
  ["Rechtsbündig", "M1 1.500h14M6 4.500h9M1 7.500h14M6 10.500h9M3 13.500h12"],
  ["Blocksatz links", "M1 1.500h14M1 4.500h14M1 7.500h14M1 10.500h14M1 13.500h10"],
  ["Blocksatz Mitte", "M1 1.500h14M1 4.500h14M1 7.500h14M1 10.500h14M3 13.500h10"],
  ["Blocksatz rechts", "M1 1.500h14M1 4.500h14M1 7.500h14M1 10.500h14M5 13.500h10"],
  ["Blocksatz", "M1 1.500h14M1 4.500h14M1 7.500h14M1 10.500h14M1 13.500h14"],
];
const indents = [
  "M0 6.500h6M4 4l2.500 2.500L4 9M8.500 1v11M10 2.500h8M10 5.500h6M10 8.500h8M10 11.500h6",
  "M0 2.500h6M4 .5l2.500 2L4 5M8 2.500h10M7 5.500h11M7 8.500h11M7 11.500h9",
  "M0 2.500h6M4 .5l2.500 2L4 5M9 2.500h9M11 5.500h7M9 8.500h9M9 11.500h6",
  "M0 2.500h8M0 5.500h6M0 8.500h8M0 11.500h6M10.500 1v11M18 6.500h-6M14.500 4 12 6.500 14.500 9",
  "M0 11.500h6M4 9l2.500 2.500L4 14M7 2.500h11M7 5.500h9M7 8.500h11M8 11.500h10",
];
const Paragraph = () => (
  <Panel>
    <Tabs><Tab $on $w={63}><Grip />Absatz<Close /></Tab><TabEnd /></Tabs>
    <AlignRow>
      {aligns.map(([l, d], i) => (
        <React.Fragment key={l}>
          {(i === 3 || i === 6) && <Spacer $w={5} />}
          <Tool aria-label={l} $on={i === 0} $w={i === 0 ? 20 : i === 1 ? 28 : 25}><Ic><path d={d} stroke="#d2d2d2" /></Ic></Tool>
        </React.Fragment>
      ))}
    </AlignRow>
    <Indents>
      {indents.map((d, i) => (
        <Indent key={i}><Ic w={19} h={15}><path d={d} /></Ic><input type="text" defaultValue="0" aria-label={`Einzug ${i + 1} in Px`} />Px</Indent>
      ))}
    </Indents>
  </Panel>
);

/* ---------- main toolbar ---------- */
const tools: ([string, React.ReactNode] | null)[] = [
  ["Hand", <><path d="M6 18v-3L2 11l1.500-1.500L7 12 5 5l1.800-.5L9 10 9 3h2v7l1.500-6.500 1.800.5L13.500 11l2.500-5 1.600.7L16 15l-2 3z" fill="#c8c8c8" stroke="none" /></>],
  ["Zoom", <><circle cx="8" cy="8" r="5" fill="#808080" stroke="#bbb" strokeWidth="1.500" /><path d="M12 12l6 6" strokeWidth="2.500" /></>],
  null,
  ["Drehen", <><path d="M5 6.500a6.300 6.300 0 1 1-1 7" strokeDasharray="1.500 1.500" strokeWidth="1.200" /><path d="M4 4v5h5z" {...F} /></>],
  ["Kamera", <><circle cx="6" cy="6" r="3" {...F} /><circle cx="12.500" cy="6" r="2.700" {...F} /><path d="M3 9h12v7H3zM15 12l4-2v6l-4-2z" {...F} /><path d="M3 9.500h12" stroke="#555" /><Corner /></>],
  ["Ausschnitt", <><path d="M2.500 3.500h16v14h-16z" strokeDasharray="2 2" strokeWidth="1.500" /><circle cx="10.500" cy="10.500" r="4.500" /><path d="M10.500 4l2 2.500h-4zM10.500 17l2-2.500h-4zM4 10.500l2.500-2v4zM17 10.500l-2.500-2v4z" {...F} /></>],
  null,
  ["Form", <><ellipse cx="10" cy="10.500" rx="6.500" ry="5.500" fill="#b2b2b2" stroke="none" /><Corner /></>],
  ["Zeichenstift", <><path d="M10 2l4 8-2 5H8l-2-5z" fill="#ddd" stroke="none" /><path d="M10 3v7" stroke="#333" /><path d="M7 16h6v3H7z" {...F} /><Corner /></>],
  ["Text", <><path d="M4.500 6V3.500h12V6M10.500 3.500v13M8 16.500h5" strokeWidth="1.400" /><Corner /></>],
  null,
  ["Pinsel", <><path d="M18 3 10 11l1 2z" fill="#ccc" stroke="#ccc" strokeWidth="1.500" /><path d="M3 17c3 0 2-4 5-5l2.500 2C9 17 6 18 3 17z" {...F} /></>],
  ["Stempel", <><circle cx="10.500" cy="5.500" r="2.700" {...F} /><path d="M9.500 8h2v4h-2zM4 11h13v4H4z" {...F} /><path d="M4 17.500h13" strokeWidth="2" stroke="#ddd" /></>],
  ["Radiergummi", <><path d="M3 14l7-8h8l-7 8z" fill="#ddd" stroke="none" /><path d="M3 14h8v3H3zM11 14l7-8v3l-7 8z" fill="#999" stroke="none" /></>],
  null,
  ["Roto-Pinsel", <><circle cx="7" cy="4" r="1.700" {...F} /><path d="M3 10l2-4h4l1 4M7 6v6l-3 5M18 5l-7 7" strokeWidth="1.800" /><path d="M8 16q3-5 4-3t-4 3" {...F} /><Corner /></>],
  null,
  ["Marionette", <><path d="M12 3l6 5-2 1-2 4-3 0-4-3 0-2 4-1z" fill="#bbb" stroke="none" /><path d="M9 12l-5 6" strokeWidth="1.500" /><Corner /></>],
];
const menus = ["Datei", "Bearbeiten", "Komposition", "Ebene", "Effekte", "Animation", "Ansicht", "Fenster", "Hilfe"];

export default function App() {
  return (
    <Window>
      <Global />
      <TitleBar>
        <AppLogo>Ae</AppLogo>
        <Title>Adobe After Effects CC 2014 - 10 Finales Resultat.aep *</Title>
        <WindowButtons>
          <WindowButton aria-label="Minimieren"><svg width="8" height="10"><path d="M0 8.500h8" stroke="#222" strokeWidth="3" /></svg></WindowButton>
          <WindowButton aria-label="Maximieren"><svg width="10" height="9" stroke="#222" fill="none"><path d="M.5.500h9v8h-9zM0 1.500h10" /></svg></WindowButton>
          <WindowButton $close aria-label="Schließen"><svg width="9" height="9" stroke="#fff" strokeWidth="1.800"><path d="M1 1l7 7M8 1 1 8" /></svg></WindowButton>
        </WindowButtons>
      </TitleBar>
      <MenuBar>{menus.map((m) => <MenuItem key={m}>{m}</MenuItem>)}</MenuBar>
      <Shell>
        <Toolbar>
          <Grip $h={19} />
          <Spacer $w={4} />
          <Tool $on aria-label="Auswahl" $w={22}><Ic w={21} h={21}><path d="M7 3v13l3-3 2 5 2-1-2-5h4z" fill="#c9c9c9" stroke="none" /></Ic></Tool>
          <Spacer $w={1} />
          {tools.map((t, i) => t ? <Tool key={i} aria-label={t[0]}><Ic w={21} h={21}>{t[1]}</Ic></Tool> : <Split key={i} />)}
          <Spacer $w={46} />
          <svg width="50" height="14" stroke="#6a6a6a" fill="none"><path d="M2.500 2.500h10v10h-10zM7.500 0v14M5 4l2.500-3L10 4M3 9l-2-2M13 7l2 2M5 10h5" /><circle cx="23" cy="7" r="4" fill="#5c5c5c" stroke="none" /><path d="M34 2.500h8M35 2v8M36 4l8 8M40 4l-4 6M41 7v5" /></svg>
          <Spacer $w={3} />
          <Split $m={1} />
          <Spacer $w={6} />
          <Check><input type="checkbox" />Ausrichten</Check>
          <Spacer $w={6} />
          <Tool aria-label="Ausrichten an" $w={20}><Ic w={14} h={14}><path d="M1 13l4-4 3 3M5 7l2-2M8 4.500 12 1M8 1h4.500v4" strokeWidth="1.300" /></Ic></Tool>
          <Spacer $w={3} />
          <Tool $on aria-label="Kanten" $w={21}><Ic w={13} h={13}><path d="M1 4V1h3M9 1h3v3M12 9v3H9M4 12H1V9" /><path d="M4.500 4.500h4v4h-4z" strokeDasharray="1.500 1" /></Ic></Tool>
          <Spacer />
          <Tool aria-label="Synchronisieren"><Ic w={21} h={14}><rect x="0" y="2" width="19" height="10" rx="1" fill="#ddd" stroke="none" /><circle cx="5" cy="7" r="2.500" stroke="#222" strokeWidth="2" strokeDasharray="1.600 .4" /><path d="M10 6h4v3M12 4l-2 2 2 2M17 9h-3M15 7l2 2-2 2" stroke="#222" strokeWidth="1.300" /></Ic></Tool>
          <Spacer $w={8} />
          <span>Arbeitsbereich:</span>
          <Spacer $w={10} />
          <Select label="Arbeitsbereich" value="Standard" w={138} />
          <Spacer $w={7} />
          <Search w={192} label="Hilfe durchsuchen" placeholder="Hilfe durchsuchen" />
        </Toolbar>
        <TopArea><Project /><Composition /><Sidebar /></TopArea>
        <BottomArea><Timeline /><Paragraph /></BottomArea>
      </Shell>
    </Window>
  );
}
